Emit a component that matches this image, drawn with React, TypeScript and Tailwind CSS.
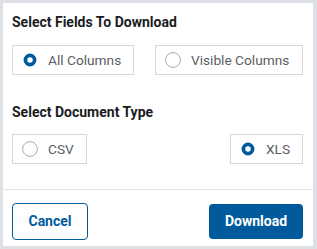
const Radio = ({ checked }: { checked: boolean }) => (
  <svg width="16" height="16" viewBox="0 0 16 16" className="block">
    {checked ? (
      <circle cx="8" cy="8" r="4.6" fill="white" stroke="#015a9c" strokeWidth="3.7" />
    ) : (
      <circle cx="8" cy="8" r="7.4" fill="white" stroke="#a9acb1" strokeWidth="1" />
    )}
  </svg>
);

const Option = ({ label, checked, className }: { label: string; checked: boolean; className: string }) => (
  <div className={`flex items-center h-[30px] border border-[#d5d7db] bg-white text-[13.7px] text-[#5a5d62] ${className}`}>
    <span className="ml-[9px]">
      <Radio checked={checked} />
    </span>
    <span className="ml-[10px]">{label}</span>
  </div>
);

export default function App() {
  return (
    <div className="w-[317px] h-[249px] bg-[#dde0e5] p-[3px] pr-[4px]" style={{ fontFamily: 'Roboto, "Liberation Sans", sans-serif' }}>
      <div className="w-full h-full bg-white flex flex-col">
        <div className="pl-[9px] pr-[10px] pt-[11px] flex-1">
          <h2 className="text-[14px] font-bold text-[#1b1c1e] leading-[16px]">Select Fields To Download</h2>
          <div className="flex justify-between mt-[15px]">
            <Option label="All Columns" checked className="w-[122px]" />
            <Option label="Visible Columns" checked={false} className="w-[148px]" />
          </div>
          <h2 className="text-[14px] font-bold text-[#1b1c1e] leading-[16px] mt-[29px]">Select Document Type</h2>
          <div className="flex justify-between mt-[14px]">
            <Option label="CSV" checked={false} className="w-[75px]" />
            <Option label="XLS" checked className="w-[73px]" />
          </div>
        </div>
        <div className="h-px bg-[#e1e3e6]" />
        <div className="flex justify-between items-center pl-[9px] pr-[10px] pt-[13px] pb-[6px]">
          <button className="w-[76px] h-[37px] rounded-[4px] border border-[#015a9c] text-[#015a9c] font-bold text-[14px] bg-white">
            Cancel
          </button>
          <button className="w-[94px] h-[35px] rounded-[4px] bg-[#015a9c] text-white font-bold text-[14px]">Download</button>
        </div>
      </div>
    </div>
  );
}
